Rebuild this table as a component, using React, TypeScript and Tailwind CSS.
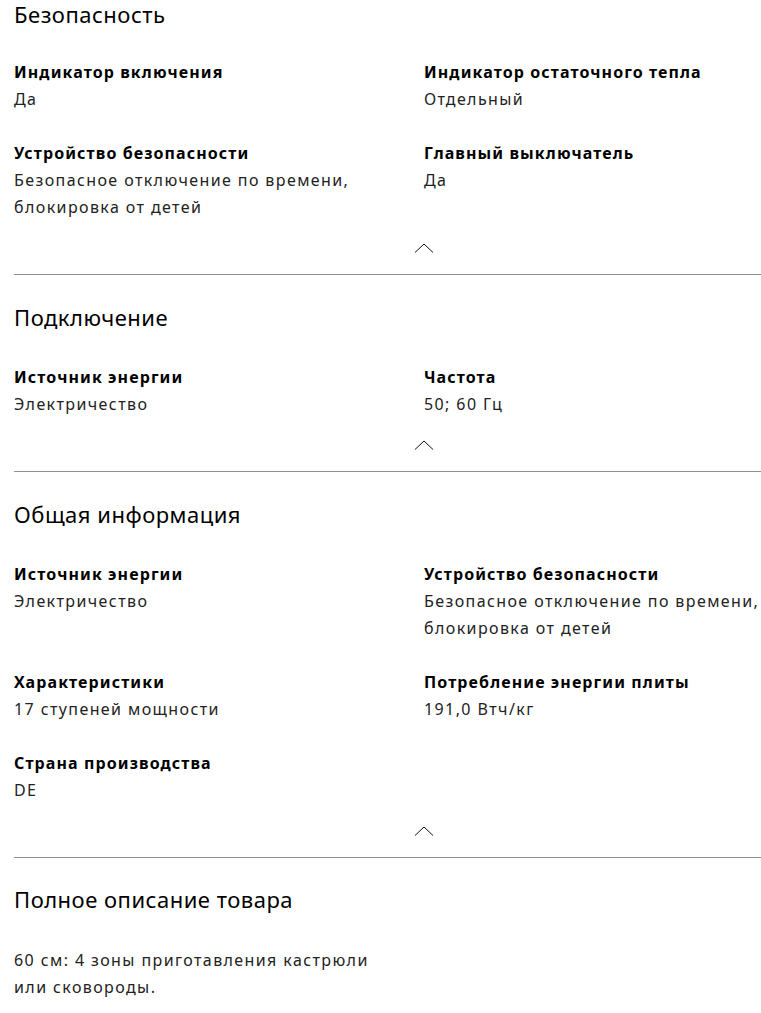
const SECTIONS = [
  {
    title: "Безопасность",
    items: [
      { label: "Индикатор включения", value: ["Да"] },
      { label: "Индикатор остаточного тепла", value: ["Отдельный"] },
      { label: "Устройство безопасности", value: ["Безопасное отключение по времени,", "блокировка от детей"] },
      { label: "Главный выключатель", value: ["Да"] },
    ],
  },
  {
    title: "Подключение",
    items: [
      { label: "Источник энергии", value: ["Электричество"] },
      { label: "Частота", value: ["50; 60 Гц"] },
    ],
  },
  {
    title: "Общая информация",
    items: [
      { label: "Источник энергии", value: ["Электричество"] },
      { label: "Устройство безопасности", value: ["Безопасное отключение по времени,", "блокировка от детей"] },
      { label: "Характеристики", value: ["17 ступеней мощности"] },
      { label: "Потребление энергии плиты", value: ["191,0 Втч/кг"] },
      { label: "Страна производства", value: ["DE"] },
    ],
  },
];

function Chevron() {
  return (
    <svg width="20" height="10" viewBox="0 0 20 10" fill="none" stroke="#111" strokeWidth="1">
      <path d="M1 9.5 10 1l9 8.5" />
    </svg>
  );
}

export default function App() {
  return (
    <div className="min-h-screen overflow-hidden bg-white font-['Noto_Sans',sans-serif] text-black">
      <div className="ml-[14px] mt-[-1px] w-[820px]">
        {SECTIONS.map((s, i) => (
          <section key={s.title} className={i > 0 ? "border-t border-[#8f8f8f] pt-[27px]" : ""}>
            <h2 className="h-[30px] text-[22px] leading-[30px] tracking-[0.5px]">{s.title}</h2>
            <div className={i > 0 ? "mt-[32px] grid grid-cols-2 gap-y-[27px]" : "mt-[30px] grid grid-cols-2 gap-y-[27px]"}>
              {s.items.map((it) => (
                <div key={it.label + i}>
                  <div className="text-[16px] font-bold leading-[27px] tracking-[1.1px]">{it.label}</div>
                  {it.value.map((v) => (
                    <div key={v} className="text-[16px] leading-[27px] tracking-[1.4px] text-[#222]">
                      {v}
                    </div>
                  ))}
                </div>
              ))}
            </div>
            <div className="flex h-[53px] items-center justify-center">
              <Chevron />
            </div>
          </section>
        ))}
        <section className="border-t border-[#8f8f8f] pt-[26px]">
          <h2 className="h-[30px] text-[22px] leading-[30px] tracking-[0.5px]">Полное описание товара</h2>
          <p className="mt-[33px] text-[16px] leading-[27px] tracking-[1.4px] text-[#222]">
            60 см: 4 зоны приготавления кастрюли
            <br />
            или сковороды.
          </p>
        </section>
      </div>
    </div>
  );
}
